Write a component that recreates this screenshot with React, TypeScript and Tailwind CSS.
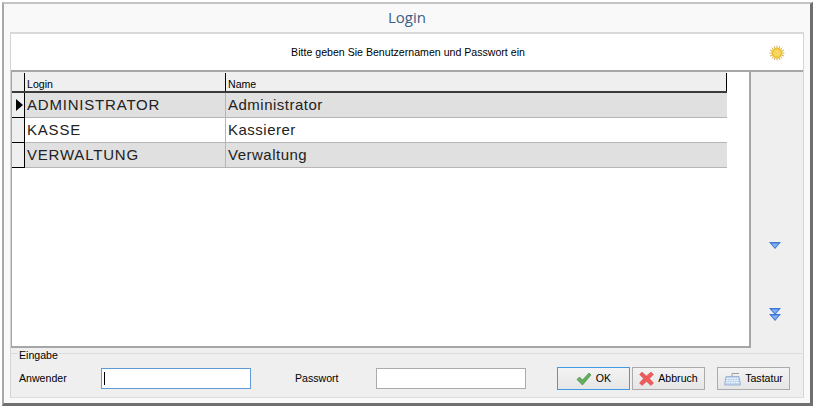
const rows = [
  { login: 'ADMINISTRATOR', name: 'Administrator', shade: true, active: true },
  { login: 'KASSE', name: 'Kassierer', shade: false, active: false },
  { login: 'VERWALTUNG', name: 'Verwaltung', shade: true, active: false },
];

function Sun() {
  return (
    <svg width="16" height="16" viewBox="0 0 16 16">
      <g stroke="#d2b25a" strokeWidth="1">
        <path d="M8 .5v15M.5 8h15M2.700 2.700l10.600 10.600M13.300 2.700L2.700 13.300M5 1l6 14M11 1l-6 14M1 5l14 6M1 11l14-6" />
      </g>
      <circle cx="8" cy="8" r="5.500" fill="#f0c23a" />
      <circle cx="8" cy="8" r="3.500" fill="#f8d760" />
    </svg>
  );
}

function ArrowDown() {
  return (
    <svg width="12" height="7" viewBox="0 0 12 7">
      <path d="M0 0h12L6 7z" fill="#3f78d8" />
      <path d="M2.500 1.500h7L6 5.500z" fill="#86b1ee" />
    </svg>
  );
}

function CheckIcon() {
  return (
    <svg width="16" height="14" viewBox="0 0 16 14">
      <path d="M1 7.500l2.500-2.500 3 3L13 1l2 2-8.500 10z" fill="#62ae5e" stroke="#4d8f4a" strokeWidth="0.700" />
    </svg>
  );
}

function CrossIcon() {
  return (
    <svg width="15" height="15" viewBox="0 0 15 15">
      <path d="M3 1l4.500 4L12 1l2.500 2.500L10.500 7.500l4 4.500-2.500 2.500-4.500-4-4.500 4L.5 12l4-4.500L.5 3.500z" fill="#ef5a5a" stroke="#d94a4a" strokeWidth="0.500" />
    </svg>
  );
}

function KeyboardIcon() {
  return (
    <svg width="17" height="14" viewBox="0 0 17 14">
      <path d="M8 4V1.500h7" fill="none" stroke="#a0a0a0" />
      <path d="M2 4.500h13l1.500 8.500H.5z" fill="#c3d6ef" stroke="#9db4d3" />
      <path d="M3 6.500h11M2.500 8.500h12M2 10.500h13" stroke="#f4f8fd" strokeWidth="1" strokeDasharray="1.500 1" />
    </svg>
  );
}

export default function App() {
  return (
    <div className="w-[815px] h-[408px] bg-white pt-[2px] pl-[2px] font-['Liberation_Sans',sans-serif] overflow-hidden">
      <div className="w-[811px] h-[404px] border-t-2 border-l-2 border-t-[#c4c4c4] border-l-[#a8a8a8] border-r-[3px] border-b-[3px] border-r-[#6f6f6f] border-b-[#6f6f6f] bg-[#f9f9f9] flex flex-col">
        {/* titel */}
        <div className="h-[28px] shrink-0 flex items-center justify-center pb-[2px] text-[15px] text-[#3b5f85] font-['Open_Sans',sans-serif]">
          Login
        </div>

        <div className="ml-[6px] mr-[6px] flex-1 flex flex-col bg-[#efefef] border-l border-r border-[#d4d4d4] border-t-2 border-t-[#d9d9d9] min-h-0">
          <div className="h-[38px] shrink-0 bg-white flex items-center border-b-2 border-[#a6a6a6] relative">
            <span className="w-full text-center pl-[2px] pt-[2px] text-[10.6px] text-black">Bitte geben Sie Benutzernamen und Passwort ein</span>
            <span className="absolute left-[758px] top-[11px]"><Sun /></span>
          </div>

          <div className="h-[276px] shrink-0 flex">
            <div className="w-[740px] bg-white border-l border-b-2 border-r-2 border-[#a6a6a6] flex flex-col">
              <div className="w-[715px] bg-[#efefef] pt-[1px] flex flex-col">
                <div className="flex h-[20px] border-b-2 border-[#3a3a3a]">
                  <div className="w-[13px] border-r border-black" />
                  <div className="w-[201px] border-r border-black text-[10.6px] leading-[20px] pl-[2px] pt-[1px]">Login</div>
                  <div className="flex-1 border-r border-black text-[10.6px] leading-[20px] pl-[2px] pt-[1px]">Name</div>
                </div>
                {rows.map(r => (
                  <div key={r.login} className="flex h-[25px]">
                    <div className="w-[13px] bg-[#efefef] border-r border-b border-black flex items-center justify-end pr-[1px]">
                      {r.active && <div className="w-0 h-0 border-y-[6px] border-y-transparent border-l-[7px] border-l-black" />}
                    </div>
                    <div className={`w-[201px] border-r border-b border-[#b5b5b5] text-[15px] leading-[23px] pl-[2px] tracking-[0.8px] text-[#222] ${r.shade ? 'bg-[#e0e0e0]' : 'bg-white'}`}>{r.login}</div>
                    <div className={`flex-1 border-b border-[#b5b5b5] text-[15px] leading-[23px] pl-[2px] tracking-[0.5px] text-[#222] ${r.shade ? 'bg-[#e0e0e0]' : 'bg-white'}`}>{r.name}</div>
                  </div>
                ))}
              </div>
            </div>
            <div className="flex-1 bg-[#efefef] flex flex-col items-center pr-[5px] pt-[170px]">
              <ArrowDown />
              <div className="mt-[59px] flex flex-col">
                <ArrowDown />
                <span className="-mt-[1px]"><ArrowDown /></span>
              </div>
            </div>
          </div>

          <div className="relative flex-1">
            <div className="absolute left-0 right-[1px] top-[5px] bottom-0 border-t border-b border-[#dcdcdc]" />
            <span className="absolute left-[7px] top-[1px] bg-[#efefef] px-[1px] text-[10.6px] leading-[13px]">Eingabe</span>
            <div className="relative h-full flex items-center pl-[8px] pt-[11px]">
              <span className="w-[82px] text-[10.6px]">Anwender</span>
              <div className="w-[150px] h-[21px] bg-white border border-[#5e9bd8] flex items-center pl-[2px]">
                <div className="w-px h-[13px] bg-black" />
              </div>
              <span className="ml-[44px] w-[81px] text-[10.6px]">Passwort</span>
              <div className="w-[150px] h-[21px] bg-white border border-[#ababab]" />
              <button className="ml-[31px] w-[73px] h-[23px] border border-[#3f9be8] bg-gradient-to-b from-[#f3f3f3] to-[#e6e6e6] flex items-center justify-center gap-[4px] text-[10.6px]">
                <CheckIcon /> OK
              </button>
              <button className="ml-[2px] w-[73px] h-[23px] border border-[#ababab] bg-gradient-to-b from-[#f3f3f3] to-[#e6e6e6] flex items-center justify-center gap-[4px] text-[10.6px]">
                <CrossIcon /> Abbruch
              </button>
              <button className="ml-[12px] w-[73px] h-[23px] border border-[#ababab] bg-gradient-to-b from-[#f3f3f3] to-[#e6e6e6] flex items-center justify-center gap-[4px] text-[10.6px]">
                <KeyboardIcon /> Tastatur
              </button>
            </div>
          </div>
        </div>
        <div className="h-[5px] shrink-0" />
      </div>
    </div>
  );
}
